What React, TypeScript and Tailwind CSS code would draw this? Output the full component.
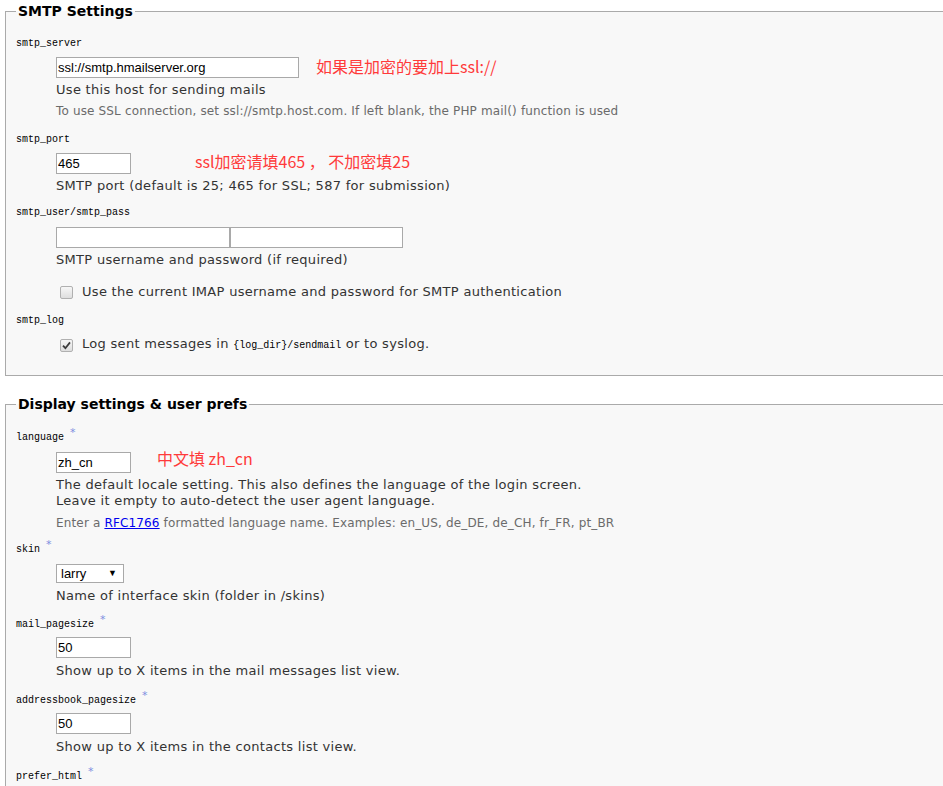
import React from 'react';

// Settings label (monospace option name)
function OptLabel({ name, req }: { name: string; req?: boolean }) {
  return (
    <div className="h-[14px] text-[10px] leading-[14px] font-['Liberation_Mono',monospace] text-black whitespace-nowrap">
      {name}
      {req && <span className="relative -top-[4px] ml-[6px] text-[11px] leading-none text-[#7d8fe0] font-['DejaVu_Sans',sans-serif]">*</span>}
    </div>
  );
}

function TextBox({ value, w }: { value?: string; w: string }) {
  return (
    <input
      readOnly
      value={value ?? ''}
      className={`block ${w} h-[21px] border border-[#a9a9a9] bg-white px-[1px] text-[13px] text-black font-['Liberation_Sans',Arial,sans-serif] outline-none`}
    />
  );
}

function Note({ children, className }: { children: React.ReactNode; className: string }) {
  return (
    <span className={`text-[16px] leading-[20px] text-[#ff3a3a] font-['Noto_Sans_CJK_SC',sans-serif] whitespace-nowrap ${className}`}>
      {children}
    </span>
  );
}

function Check({ checked }: { checked?: boolean }) {
  return (
    <span className="ml-[4px] w-[13px] h-[13px] shrink-0 rounded-[2px] border border-[#b0b0b0] bg-gradient-to-b from-[#f7f7f7] to-[#dedede] flex items-center justify-center">
      {checked && (
        <svg width="9" height="9" viewBox="0 0 9 9">
          <path d="M1 4.6 L3.4 7.2 L8 1.4" fill="none" stroke="#3c3c3c" strokeWidth="1.8" />
        </svg>
      )}
    </span>
  );
}

const desc = 'text-[13px] leading-[16px] tracking-[0.3px] text-[#333]';
const hint = 'text-[12px] leading-[16px] tracking-[0.15px] text-[#6b6b6b]';
const legend = 'px-[2px] text-[14px] leading-[22px] font-bold text-black';

export default function App() {
  return (
    <div className="w-full overflow-hidden bg-white font-['DejaVu_Sans',Verdana,sans-serif] pb-10">
      {/* SMTP Settings */}
      <fieldset className="ml-[5px] w-[980px] border border-[#aaa] bg-[#f8f8f8] px-[10px]">
        <legend className={legend}>SMTP Settings</legend>
        <div className="pt-[15px]">
          <OptLabel name="smtp_server" />
          <div className="pl-[40px] pt-[6px]">
            <div className="flex items-center">
              <TextBox value="ssl://smtp.hmailserver.org" w="w-[243px]" />
              <Note className="ml-[17px] -mt-[3px]">如果是加密的要加上ssl://</Note>
            </div>
            <div className={`${desc} mt-[4px]`}>Use this host for sending mails</div>
            <div className={`${hint} mt-[5px]`}>
              To use SSL connection, set ssl://smtp.host.com. If left blank, the PHP mail() function is used
            </div>
          </div>

          <div className="mt-[14px]">
            <OptLabel name="smtp_port" />
          </div>
          <div className="pl-[40px] pt-[6px]">
            <div className="flex items-center">
              <TextBox value="465" w="w-[75px]" />
              <Note className="ml-[64px] -mt-[5px]">ssl加密请填465 ， 不加密填25</Note>
            </div>
            <div className={`${desc} mt-[4px]`}>SMTP port (default is 25; 465 for SSL; 587 for submission)</div>
          </div>

          <div className="mt-[12px]">
            <OptLabel name="smtp_user/smtp_pass" />
          </div>
          <div className="pl-[40px] pt-[7px]">
            <div className="flex">
              <TextBox w="w-[174px]" />
              <TextBox w="w-[173px]" />
            </div>
            <div className={`${desc} mt-[4px]`}>SMTP username and password (if required)</div>
            <div className="mt-[14px] flex items-center h-[20px]">
              <Check />
              <span className={`${desc} ml-[9px]`}>Use the current IMAP username and password for SMTP authentication</span>
            </div>
          </div>

          <div className="mt-[12px]">
            <OptLabel name="smtp_log" />
          </div>
          <div className="pl-[40px] pt-[7px] pb-[20px]">
            <div className="flex items-center h-[20px]">
              <Check checked />
              <span className={`${desc} ml-[9px]`}>
                Log sent messages in{' '}
                <span className="text-[10px] tracking-normal font-['Liberation_Mono',monospace] text-black">{'{log_dir}'}/sendmail</span> or to syslog.
              </span>
            </div>
          </div>
        </div>
      </fieldset>

      {/* Display settings */}
      <fieldset className="mt-[17px] ml-[5px] w-[980px] border border-[#aaa] bg-[#f8f8f8] px-[10px]">
        <legend className={legend}>Display settings &amp; user prefs</legend>
        <div className="pt-[16px]">
          <OptLabel name="language" req />
          <div className="pl-[40px] pt-[7px]">
            <div className="flex items-center">
              <TextBox value="zh_cn" w="w-[75px]" />
              <Note className="ml-[26px] -mt-[10px]">中文填 zh_cn</Note>
            </div>
            <div className={`${desc} mt-[4px]`}>
              The default locale setting. This also defines the language of the login screen.
              <br />
              Leave it empty to auto-detect the user agent language.
            </div>
            <div className={`${hint} mt-[6px]`}>
              Enter a <a className="text-[#0000ee] underline">RFC1766</a> formatted language name. Examples: en_US, de_DE, de_CH, fr_FR, pt_BR
            </div>
          </div>

          <div className="mt-[12px]">
            <OptLabel name="skin" req />
          </div>
          <div className="pl-[40px] pt-[7px]">
            <div className="w-[68px] h-[19px] border border-[#a9a9a9] bg-white flex items-center justify-between pl-[4px] pr-[6px] text-[13px] text-black font-['Liberation_Sans',Arial,sans-serif]">
              <span>larry</span>
              <span className="text-[9px]">▼</span>
            </div>
            <div className={`${desc} mt-[5px]`}>Name of interface skin (folder in /skins)</div>
          </div>

          <div className="mt-[14px]">
            <OptLabel name="mail_pagesize" req />
          </div>
          <div className="pl-[40px] pt-[5px]">
            <TextBox value="50" w="w-[75px]" />
            <div className={`${desc} mt-[5px]`}>Show up to X items in the mail messages list view.</div>
          </div>

          <div className="mt-[15px]">
            <OptLabel name="addressbook_pagesize" req />
          </div>
          <div className="pl-[40px] pt-[5px]">
            <TextBox value="50" w="w-[75px]" />
            <div className={`${desc} mt-[5px]`}>Show up to X items in the contacts list view.</div>
          </div>

          <div className="mt-[15px] pb-[40px]">
            <OptLabel name="prefer_html" req />
          </div>
        </div>
      </fieldset>
    </div>
  );
}
